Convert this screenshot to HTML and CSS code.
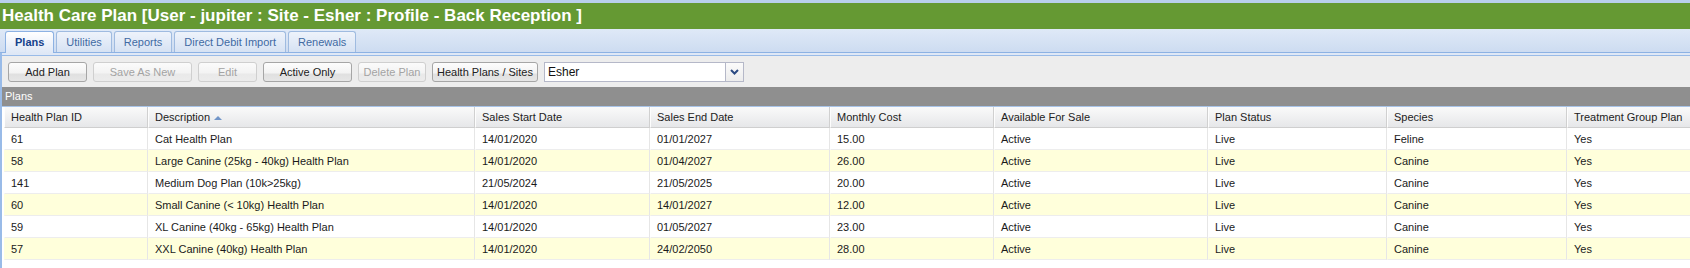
FILE: index.html
```html
<!DOCTYPE html>
<html>
<head>
  <meta charset="UTF-8">
  <title>Health Care Plan</title>
  <link rel="stylesheet" href="styles.css">
</head>
<body>
  <div class="title-bar">Health Care Plan [User - jupiter : Site - Esher : Profile - Back Reception ]</div>

  <div class="tab-strip">
    <div class="tab active">Plans</div>
    <div class="tab">Utilities</div>
    <div class="tab">Reports</div>
    <div class="tab">Direct Debit Import</div>
    <div class="tab">Renewals</div>
  </div>

  <div class="tab-body">
    <div class="toolbar">
      <button class="btn btn-add">Add Plan</button>
      <button class="btn btn-save" disabled>Save As New</button>
      <button class="btn btn-edit" disabled>Edit</button>
      <button class="btn btn-active">Active Only</button>
      <button class="btn btn-delete" disabled>Delete Plan</button>
      <button class="btn btn-sites">Health Plans / Sites</button>
      <div class="combo">
        <span class="combo-text">Esher</span>
        <span class="combo-trigger">
          <svg width="9" height="6" viewBox="0 0 9 6"><polyline points="1,1 4.5,4.5 8,1" fill="none" stroke="#2b4a82" stroke-width="2"/></svg>
        </span>
      </div>
    </div>

    <div class="panel-header">Plans</div>

    <div class="grid">
      <table>
        <thead>
          <tr>
            <th class="col-id">Health Plan ID</th>
            <th class="col-desc">Description<span class="sort-asc"></span></th>
            <th class="col-start">Sales Start Date</th>
            <th class="col-end">Sales End Date</th>
            <th class="col-cost">Monthly Cost</th>
            <th class="col-avail">Available For Sale</th>
            <th class="col-status">Plan Status</th>
            <th class="col-species">Species</th>
            <th class="col-group">Treatment Group Plan</th>
          </tr>
        </thead>
        <tbody>
          <tr>
            <td>61</td><td>Cat Health Plan</td><td>14/01/2020</td><td>01/01/2027</td><td>15.00</td><td>Active</td><td>Live</td><td>Feline</td><td>Yes</td>
          </tr>
          <tr>
            <td>58</td><td>Large Canine (25kg - 40kg) Health Plan</td><td>14/01/2020</td><td>01/04/2027</td><td>26.00</td><td>Active</td><td>Live</td><td>Canine</td><td>Yes</td>
          </tr>
          <tr>
            <td>141</td><td>Medium Dog Plan (10k&gt;25kg)</td><td>21/05/2024</td><td>21/05/2025</td><td>20.00</td><td>Active</td><td>Live</td><td>Canine</td><td>Yes</td>
          </tr>
          <tr>
            <td>60</td><td>Small Canine (&lt; 10kg) Health Plan</td><td>14/01/2020</td><td>14/01/2027</td><td>12.00</td><td>Active</td><td>Live</td><td>Canine</td><td>Yes</td>
          </tr>
          <tr>
            <td>59</td><td>XL Canine (40kg - 65kg) Health Plan</td><td>14/01/2020</td><td>01/05/2027</td><td>23.00</td><td>Active</td><td>Live</td><td>Canine</td><td>Yes</td>
          </tr>
          <tr>
            <td>57</td><td>XXL Canine (40kg) Health Plan</td><td>14/01/2020</td><td>24/02/2050</td><td>28.00</td><td>Active</td><td>Live</td><td>Canine</td><td>Yes</td>
          </tr>
        </tbody>
      </table>
    </div>
  </div>
</body>
</html>
```

FILE: styles.css
```css
body {
  margin: 0;
  background-color: #fff;
  font-family: "Liberation Sans", Arial, sans-serif;
  font-size: 11px;
  color: #1a1a1a;
  overflow: hidden;
}

.title-bar {
  border-top: 3px solid #b9cfec;
  height: 26px;
  line-height: 26px;
  padding-left: 2px;
  background-color: #659933;
  color: #fff;
  font-size: 17px;
  font-weight: bold;
  white-space: nowrap;
}

.tab-strip {
  display: flex;
  align-items: flex-end;
  gap: 2px;
  height: 23px;
  padding-left: 5px;
  background: linear-gradient(#dfe9f7, #cddcf1);
  border-bottom: 1px solid #8db2e3;
}

.tab {
  height: 21px;
  line-height: 21px;
  padding: 0 9px;
  border: 1px solid #9fbbe0;
  border-bottom: none;
  border-radius: 3px 3px 0 0;
  background: linear-gradient(#eef3fb, #d6e2f3);
  color: #416aa3;
  box-sizing: border-box;
}

.tab.active {
  height: 22px;
  margin-bottom: -1px;
  border-color: #8db2e3;
  background: linear-gradient(#ffffff, #dfe8f6);
  color: #15428b;
  font-weight: bold;
}

.tab-body {
  border-left: 2px solid #99bbe8;
  background-color: #dfe8f6;
  padding-top: 2px;
}

.toolbar {
  display: flex;
  align-items: center;
  gap: 6px;
  border-top: 1px solid #99bbe8;
  background-color: #ededed;
  padding: 6px 6px 5px 6px;
}

.btn {
  height: 20px;
  padding: 0;
  border: 1px solid #a6a6a6;
  border-radius: 3px;
  background: linear-gradient(#fdfdfd 0%, #f3f3f3 55%, #e0e0e0 62%, #e6e6e6 100%);
  font-family: "Liberation Sans", Arial, sans-serif;
  font-size: 11px;
  color: #222;
  box-sizing: border-box;
}

.btn:disabled {
  border-color: #cfcfcf;
  background: linear-gradient(#fbfbfb 0%, #f3f3f3 55%, #e9e9e9 62%, #ececec 100%);
  color: #a3a3a3;
}

.btn-add { width: 79px; }
.btn-save { width: 99px; }
.btn-edit { width: 59px; }
.btn-active { width: 89px; }
.btn-delete { width: 68px; }
.btn-sites { width: 106px; }

.combo {
  display: flex;
  width: 200px;
  height: 20px;
  border: 1px solid #b5b8c8;
  background-color: #fff;
  box-sizing: border-box;
}

.combo-text {
  flex: 1;
  padding-left: 3px;
  line-height: 18px;
  font-size: 12px;
  color: #111;
}

.combo-trigger {
  display: flex;
  align-items: center;
  justify-content: center;
  width: 17px;
  border-left: 1px solid #b5b8c8;
  background: linear-gradient(#fbfbfb, #ececec);
}

.panel-header {
  height: 19px;
  line-height: 18px;
  padding-left: 3px;
  background-color: #8f8f8f;
  border-bottom: 1px solid #a9c4e8;
  color: #fff;
}

.grid {
  padding-left: 2px;
  background-color: #fff;
  overflow: hidden;
  height: 161px;
}

.grid table {
  table-layout: fixed;
  border-collapse: separate;
  border-spacing: 0;
  width: 1763px;
}

.grid th,
.grid td {
  box-sizing: border-box;
  padding: 0 6px;
  text-align: left;
  white-space: nowrap;
  overflow: hidden;
}

.grid th {
  height: 21px;
  font-weight: normal;
  color: #222;
  background: linear-gradient(#fafafa, #e6e7e9);
  border-left: 1px solid #fdfdfd;
  border-right: 1px solid #d0d0d0;
  border-bottom: 1px solid #cfcfcf;
}

.grid td {
  height: 22px;
  border-left: 1px solid #fff;
  border-right: 1px solid #e6e6e6;
  border-bottom: 1px solid #ededed;
}

.grid tbody tr:nth-child(even) td {
  background-color: #ffffdb;
  border-left-color: #ffffdb;
}

.col-id { width: 144px; }
.col-desc { width: 327px; }
.col-start { width: 175px; }
.col-end { width: 180px; }
.col-cost { width: 164px; }
.col-avail { width: 214px; }
.col-status { width: 179px; }
.col-species { width: 180px; }
.col-group { width: 200px; }

.sort-asc {
  display: inline-block;
  margin-left: 4px;
  vertical-align: 1px;
  border-left: 4px solid transparent;
  border-right: 4px solid transparent;
  border-bottom: 4px solid #7195c8;
}
```
